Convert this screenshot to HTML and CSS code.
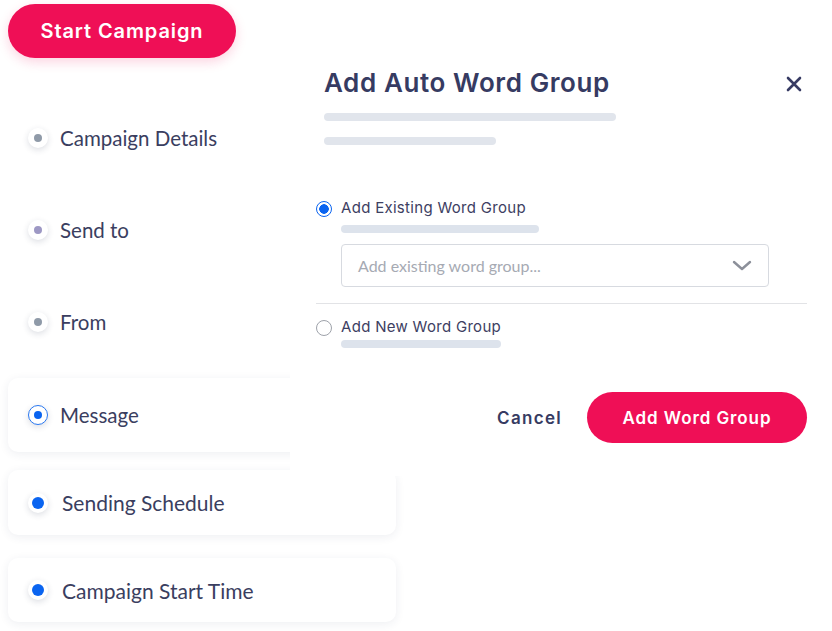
FILE: index.html
```html
<!DOCTYPE html>
<html>

<head>
  <meta charset="utf-8">
  <meta name="viewport" content="width=device-width">
  <title>Start Campaign</title>
  <link rel="stylesheet" href="styles.css">
</head>

<body>
  <div class="steps">
    <button class="btn-primary start-btn">Start Campaign</button>
    <ul class="step-list">
      <li class="step"><span class="dot"></span>Campaign Details</li>
      <li class="step"><span class="dot dot-purple"></span>Send to</li>
      <li class="step"><span class="dot"></span>From</li>
      <li class="step card"><span class="dot dot-active"></span>Message</li>
      <li class="step card"><span class="dot dot-done"></span>Sending Schedule</li>
      <li class="step card"><span class="dot dot-done"></span>Campaign Start Time</li>
    </ul>
  </div>

  <div class="modal">
    <div class="modal-head">
      <h2>Add Auto Word Group</h2>
      <svg class="close" width="16" height="16" viewBox="0 0 16 16">
        <path d="M2 2L14 14M14 2L2 14" stroke="#373b63" stroke-width="2.6" stroke-linecap="round" fill="none" />
      </svg>
    </div>
    <div class="skel skel-long"></div>
    <div class="skel skel-short"></div>

    <label class="option first">
      <span class="radio checked"></span>Add Existing Word Group
    </label>
    <div class="skel skel-sub"></div>
    <div class="select">
      <span>Add existing word group...</span>
      <svg width="20" height="12" viewBox="0 0 20 12">
        <path d="M2 2L10 9L18 2" stroke="#8c909a" stroke-width="2.4" stroke-linecap="round" stroke-linejoin="round" fill="none" />
      </svg>
    </div>
    <hr>
    <label class="option">
      <span class="radio"></span>Add New Word Group
    </label>
    <div class="skel skel-sub2"></div>

    <div class="actions">
      <button class="cancel">Cancel</button>
      <button class="btn-primary add-btn">Add Word Group</button>
    </div>
  </div>
</body>

</html>
```

FILE: styles.css
```css
html,
body {
  margin: 0;
  height: 100%;
  background: #fff;
  font-family: Lato, "Noto Sans", sans-serif;
  color: #3a3e60;
}

body {
  position: relative;
  overflow: hidden;
}

.steps {
  padding: 4px 0 0 8px;
  width: 388px;
}

.btn-primary {
  border: none;
  border-radius: 999px;
  background: #ef0f56;
  color: #fff;
  font-family: Inter, sans-serif;
  font-weight: 600;
  cursor: pointer;
}

.start-btn {
  width: 228px;
  height: 54px;
  font-size: 20px;
  letter-spacing: 0.9px;
  box-shadow: 0 4px 12px rgba(239, 15, 86, 0.18);
}

.step-list {
  list-style: none;
  margin: 44px 0 0;
  padding: 0;
  display: flex;
  flex-direction: column;
  gap: 20px;
}

.step {
  height: 72px;
  display: flex;
  align-items: center;
  gap: 12px;
  padding-left: 20px;
  font-size: 20.5px;
}

.step.card {
  height: 65px;
  background: #fff;
  border-radius: 10px;
  box-shadow: 0 2px 10px rgba(40, 50, 90, 0.08);
}

.step.card:nth-child(4) {
  height: 74px;
}

.step.card:nth-child(n+5) {
  gap: 14px;
  font-size: 21px;
}

.step.card:nth-child(5) {
  margin-top: -2px;
}

.step.card:nth-child(6) {
  margin-top: 3px;
  height: 64px;
}

.dot {
  width: 20px;
  height: 20px;
  flex-shrink: 0;
  border-radius: 50%;
  background: #fff;
  box-shadow: 0 2px 6px rgba(40, 50, 80, 0.16);
  display: flex;
  align-items: center;
  justify-content: center;
  box-sizing: border-box;
}

.dot::after {
  content: "";
  width: 8px;
  height: 8px;
  border-radius: 50%;
  background: #8f9aa8;
}

.dot-purple::after {
  background: #9d98c4;
}

.dot-active {
  border: 1.5px solid #2a78f0;
}

.dot-active::after {
  background: #0a64f0;
}

.dot-done::after {
  width: 12px;
  height: 12px;
  background: #0a64f0;
}

.modal {
  position: absolute;
  left: 290px;
  top: 48px;
  width: 491px;
  height: 412px;
  padding: 16px 25px 0 26px;
  background: #fff;
  font-family: Inter, sans-serif;
}

.modal-head {
  display: flex;
  align-items: center;
  justify-content: space-between;
  padding-left: 8px;
  height: 36px;
}

.modal-head h2 {
  margin: 0;
  font-size: 26px;
  font-weight: 600;
  color: #363b62;
  letter-spacing: 0.6px;
}

.close {
  margin-right: 5px;
  margin-top: 4px;
}

.skel {
  height: 8px;
  border-radius: 4px;
  background: #e1e5ec;
}

.skel-long {
  width: 292px;
  margin: 13px 0 0 8px;
}

.skel-short {
  width: 172px;
  margin: 16px 0 0 8px;
}

.option {
  display: flex;
  align-items: center;
  gap: 9px;
  height: 22px;
  font-size: 15px;
  letter-spacing: 0.3px;
  color: #3d4062;
}

.option.first {
  margin-top: 51px;
}

.radio {
  width: 16px;
  height: 16px;
  border-radius: 50%;
  border: 1px solid #9ea2aa;
  box-sizing: border-box;
  margin-top: 3px;
}

.radio.checked {
  border: 1.5px solid #0a64f0;
  background: radial-gradient(circle, #0a64f0 0 4.5px, #fff 5px);
}

.skel-sub {
  width: 198px;
  margin: 7px 0 0 25px;
  background: #dde3ec;
}

.skel-sub2 {
  width: 160px;
  margin: 3px 0 0 25px;
  background: #dde3ec;
}

.select {
  margin: 11px 38px 0 25px;
  height: 43px;
  box-sizing: border-box;
  border: 1px solid #d7dae0;
  border-radius: 4px;
  display: flex;
  align-items: center;
  justify-content: space-between;
  padding: 0 16px 0 16px;
  font-family: Lato, sans-serif;
  font-size: 16px;
  color: #a6aab3;
}

hr {
  margin: 16px 0 11px;
  border: none;
  border-top: 1px solid #e2e3e6;
}

.actions {
  margin-top: 44px;
  display: flex;
  justify-content: flex-end;
  align-items: center;
  gap: 25px;
}

.cancel {
  border: none;
  background: none;
  font-family: Inter, sans-serif;
  font-weight: 600;
  font-size: 17px;
  color: #363b62;
  padding: 0;
  letter-spacing: 1.3px;
}

.add-btn {
  width: 220px;
  height: 51px;
  font-size: 17px;
  letter-spacing: 0.9px;
}
```
